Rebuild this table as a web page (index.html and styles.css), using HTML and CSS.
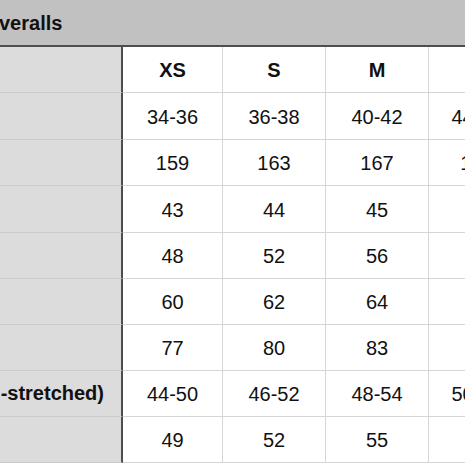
FILE: index.html
```html
<!DOCTYPE html>
<html>
<head>
<meta charset="utf-8">
<link rel="stylesheet" href="styles.css">
</head>
<body>
<div class="page">
  <div class="title">veralls</div>
  <div class="grid">
    <div class="lab"></div><div class="c hd">XS</div><div class="c hd">S</div><div class="c hd">M</div><div class="c hd"></div>
    <div class="lab"></div><div class="c">34-36</div><div class="c">36-38</div><div class="c">40-42</div><div class="c">44-46</div>
    <div class="lab"></div><div class="c">159</div><div class="c">163</div><div class="c">167</div><div class="c">171</div>
    <div class="lab"></div><div class="c">43</div><div class="c">44</div><div class="c">45</div><div class="c">46</div>
    <div class="lab"></div><div class="c">48</div><div class="c">52</div><div class="c">56</div><div class="c">60</div>
    <div class="lab"></div><div class="c">60</div><div class="c">62</div><div class="c">64</div><div class="c">66</div>
    <div class="lab"></div><div class="c">77</div><div class="c">80</div><div class="c">83</div><div class="c">86</div>
    <div class="lab txt">-stretched)</div><div class="c">44-50</div><div class="c">46-52</div><div class="c">48-54</div><div class="c">50-56</div>
    <div class="lab"></div><div class="c">49</div><div class="c">52</div><div class="c">55</div><div class="c">58</div>
  </div>
</div>
</body>
</html>
```
FILE: styles.css
```css
html, body {
  margin: 0;
  padding: 0;
  background: #ffffff;
  overflow: hidden;
}
.page {
  width: 465px;
  height: 465px;
  overflow: hidden;
  font-family: "Liberation Sans", Arial, sans-serif;
  color: #111;
}
.title {
  box-sizing: border-box;
  height: 47px;
  background: #c1c1c1;
  border-bottom: 2px solid #4e4e4e;
  font-weight: bold;
  font-size: 20px;
  line-height: 45px;
  padding-top: 1px;
  padding-left: 0;
  margin-left: -1px;
}
.grid {
  display: grid;
  grid-template-columns: 123px 100px 103px 103px 97px;
  grid-template-rows: 46px 47px 46px 47px 46px 46px 46px 46px 46px;
  width: 526px;
}
.grid > div {
  box-sizing: border-box;
  display: flex;
  align-items: center;
  font-size: 20px;
}
.lab {
  background: #dcdcdc;
  border-right: 2px solid #4e4e4e;
  border-bottom: 1px solid #cbcbcb;
  justify-content: flex-end;
  padding-right: 17px;
  font-weight: bold;
}
.c {
  background: #ffffff;
  border-right: 1px solid #d6d6d6;
  border-bottom: 1px solid #d6d6d6;
  justify-content: center;
  padding-top: 2px;
}
.hd {
  font-weight: bold;
}
```
